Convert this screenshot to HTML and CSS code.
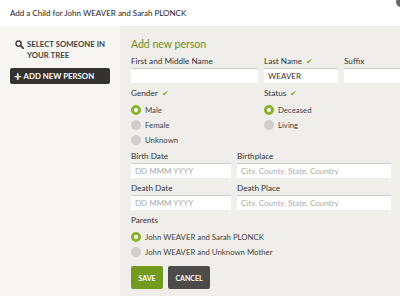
FILE: index.html
```html
<!DOCTYPE html>
<html>
<head>
    <title>Add a Child</title>
    <link rel="stylesheet" href="styles.css">
</head>
<body>
    <div class="dialog">
        <div class="header">
            <span class="title">Add a Child for John WEAVER and Sarah PLONCK</span>
            <span class="close"></span>
        </div>
        <div class="content">
            <div class="sidebar">
                <div class="select-link">
                    <svg class="search" width="9" height="9" viewBox="0 0 9 9"><circle cx="3.6" cy="3.6" r="2.6" fill="none" stroke="#444" stroke-width="1.5"/><path d="M5.5 5.5 L8.3 8.3" stroke="#444" stroke-width="1.8" stroke-linecap="round"/></svg>
                    <span>SELECT SOMEONE IN YOUR TREE</span>
                </div>
                <div class="add-btn"><span class="plus">+</span>ADD NEW PERSON</div>
            </div>
            <div class="main">
                <h2>Add new person</h2>
                <div class="row">
                    <div class="field first">
                        <label>First and Middle Name</label>
                        <input type="text">
                    </div>
                    <div class="field last">
                        <label>Last Name <span class="check">✔</span></label>
                        <input type="text" value="WEAVER">
                    </div>
                    <div class="field suffix">
                        <label>Suffix</label>
                        <input type="text">
                    </div>
                </div>
                <div class="row">
                    <div class="group gender">
                        <div class="group-label">Gender <span class="check">✔</span></div>
                        <div class="radio"><span class="dot on"></span>Male</div>
                        <div class="radio"><span class="dot"></span>Female</div>
                        <div class="radio"><span class="dot"></span>Unknown</div>
                    </div>
                    <div class="group">
                        <div class="group-label">Status <span class="check">✔</span></div>
                        <div class="radio"><span class="dot on"></span>Deceased</div>
                        <div class="radio"><span class="dot"></span>Living</div>
                    </div>
                </div>
                <div class="row">
                    <div class="field date">
                        <label>Birth Date</label>
                        <input type="text" placeholder="DD MMM YYYY">
                    </div>
                    <div class="field place">
                        <label>Birthplace</label>
                        <input type="text" placeholder="City, County, State, Country">
                    </div>
                </div>
                <div class="row">
                    <div class="field date">
                        <label>Death Date</label>
                        <input type="text" placeholder="DD MMM YYYY">
                    </div>
                    <div class="field place">
                        <label>Death Place</label>
                        <input type="text" placeholder="City, County, State, Country">
                    </div>
                </div>
                <div class="group parents">
                    <div class="group-label">Parents</div>
                    <div class="radio"><span class="dot on"></span>John WEAVER and Sarah PLONCK</div>
                    <div class="radio"><span class="dot"></span>John WEAVER and Unknown Mother</div>
                </div>
                <div class="buttons">
                    <button class="save">SAVE</button>
                    <button class="cancel">CANCEL</button>
                </div>
            </div>
        </div>
    </div>
</body>
</html>
```

FILE: styles.css
```css
body {
    margin: 0;
    font-family: Lato, "Open Sans", sans-serif;
    font-size: 8.2px;
    color: #333;
    background: #fff;
    overflow: hidden;
}
.dialog {
    width: 400px;
    height: 296px;
    display: flex;
    flex-direction: column;
}
.header {
    height: 26px;
    padding-left: 10px;
    display: flex;
    align-items: center;
    position: relative;
    background: #fff;
}
.title {
    font-size: 8px;
    color: #222;
}
.close {
    position: absolute;
    right: -6px;
    top: -3px;
    width: 10px;
    height: 10px;
    border-radius: 50%;
    background: #666;
}
.content {
    flex: 1;
    display: flex;
    min-width: 0;
}
.sidebar {
    flex: none;
    width: 120px;
    background: #f7f6f2;
    padding: 13px 10px 0 10px;
    box-sizing: border-box;
}
.select-link {
    display: flex;
    align-items: flex-start;
    gap: 3px;
    padding-left: 5px;
    font-size: 7.8px;
    font-weight: bold;
    color: #444;
    line-height: 11px;
}
.search {
    margin-top: 1px;
    flex: none;
}
.add-btn {
    margin-top: 7px;
    height: 16px;
    background: #333231;
    color: #fff;
    border-radius: 2px;
    font-size: 7.8px;
    font-weight: bold;
    display: flex;
    align-items: center;
    padding-left: 4px;
}
.plus {
    font-size: 13px;
    font-weight: bold;
    margin-right: 2px;
    line-height: 10px;
}
.main {
    flex: 1;
    min-width: 0;
    overflow: hidden;
    background: #efeeea;
    padding: 11px 0 0 11px;
}
h2 {
    margin: 0 0 5px;
    font-size: 10.5px;
    line-height: 14px;
    font-weight: normal;
    color: #6d8d1f;
}
.row {
    display: flex;
    gap: 6px;
}
.field {
    display: flex;
    flex-direction: column;
    flex: none;
}
label, .group-label {
    font-size: 8.2px;
    line-height: 11px;
    color: #333;
    margin-bottom: 1px;
}
.group-label {
    margin-bottom: 3px;
}
input {
    height: 15px;
    border: none;
    border-top: 1px solid #ccc;
    background: #fff;
    padding: 0 4px;
    font-family: inherit;
    font-size: 8px;
    color: #333;
    box-sizing: border-box;
    margin: 0 0 5px;
}
input::placeholder {
    color: #aaa;
}
.first input { width: 127px; }
.last input { width: 74px; }
.suffix input { width: 60px; }
.date input { width: 100px; }
.place input { width: 154px; }
.check {
    color: #8cb32b;
    font-size: 7.5px;
    margin-left: 2px;
}
.group {
    display: flex;
    flex-direction: column;
    margin-bottom: 4px;
}
.gender {
    width: 127px;
}
.radio {
    display: flex;
    align-items: center;
    height: 15px;
    font-size: 7.8px;
    color: #444;
}
.dot {
    width: 10px;
    height: 10px;
    border-radius: 50%;
    background: #cfceca;
    margin-right: 4px;
    box-sizing: border-box;
}
.dot.on {
    background: #fff;
    border: 3px solid #8ab22a;
}
.parents {
    margin-bottom: 7px;
}
.buttons {
    display: flex;
    gap: 5px;
}
button {
    height: 23px;
    border: none;
    border-radius: 2px;
    color: #fff;
    font-family: inherit;
    font-size: 7px;
    font-weight: bold;
    padding: 0;
}
.save {
    width: 32px;
    background: #739a1c;
}
.cancel {
    width: 42px;
    background: #4c4b49;
}
```
